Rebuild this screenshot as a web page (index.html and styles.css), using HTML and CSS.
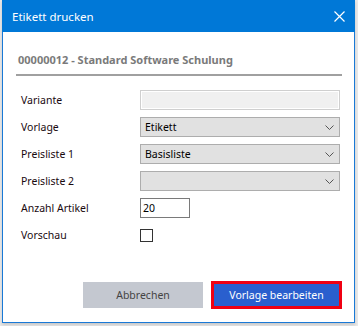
FILE: index.html
```html
<!DOCTYPE html>
<html lang="de">
<head>
    <meta charset="UTF-8">
    <title>Etikett drucken</title>
    <link rel="stylesheet" href="styles.css">
</head>
<body>
    <div class="dialog">
        <div class="title-bar">
            <span class="title">Etikett drucken</span>
            <svg class="close" width="11" height="11" viewBox="0 0 11 11">
                <path d="M0.5 0.5 L10.5 10.5 M10.5 0.5 L0.5 10.5" stroke="#fff" stroke-width="1.2" fill="none"/>
            </svg>
        </div>

        <div class="content">
            <div class="heading">00000012 - Standard Software Schulung</div>

            <div class="form">
                <label>Variante</label>
                <div class="field readonly"></div>

                <label>Vorlage</label>
                <div class="field combo"><span>Etikett</span><svg class="chevron" width="9" height="5" viewBox="0 0 9 5"><path d="M0.5 0.5 L4.5 4.5 L8.5 0.5" stroke="#555" fill="none"/></svg></div>

                <label>Preisliste 1</label>
                <div class="field combo"><span>Basisliste</span><svg class="chevron" width="9" height="5" viewBox="0 0 9 5"><path d="M0.5 0.5 L4.5 4.5 L8.5 0.5" stroke="#555" fill="none"/></svg></div>

                <label>Preisliste 2</label>
                <div class="field combo"><span></span><svg class="chevron" width="9" height="5" viewBox="0 0 9 5"><path d="M0.5 0.5 L4.5 4.5 L8.5 0.5" stroke="#555" fill="none"/></svg></div>

                <label>Anzahl Artikel</label>
                <div class="field number">20</div>

                <label>Vorschau</label>
                <div class="checkbox-cell"><div class="checkbox"></div></div>
            </div>

            <div class="button-container">
                <button class="btn-cancel">Abbrechen</button>
                <button class="btn-primary">Vorlage bearbeiten</button>
            </div>
        </div>
    </div>
</body>
</html>
```

FILE: styles.css
```css
body {
    margin: 0;
    background: #e9e9e9;
    font-family: "Noto Sans", "Open Sans", sans-serif;
    font-size: 10.5px;
    width: 358px;
    height: 326px;
    overflow: hidden;
}

.dialog {
    margin-left: 2px;
    width: 351px;
    height: 322px;
    border: 1px solid #1979d6;
    border-top: none;
    background: #fff;
    display: flex;
    flex-direction: column;
    box-shadow: 0 2px 3px rgba(0, 0, 0, 0.15);
}

.title-bar {
    height: 32px;
    background: #0078d7;
    color: #fff;
    display: flex;
    align-items: center;
    justify-content: space-between;
    padding: 0 10px 0 10px;
    margin: 0 -1px;
}

.title {
    font-size: 11.5px;
}

.content {
    flex: 1;
    display: flex;
    flex-direction: column;
    padding: 0 12px 0 13px;
}

.heading {
    margin-top: 20px;
    padding: 0 0 7px 2px;
    color: #7a7a7a;
    font-weight: bold;
    font-size: 11px;
    border-bottom: 2px solid #a0a0a0;
}

.form {
    display: grid;
    grid-template-columns: 119px 200px;
    grid-auto-rows: 20px;
    row-gap: 7px;
    margin-top: 14px;
    padding-left: 5px;
    align-items: center;
}

.form label {
    color: #1a0a10;
}

.field {
    box-sizing: border-box;
    height: 20px;
    display: flex;
    align-items: center;
    padding: 0 4px;
}

.readonly {
    background: #f0f0f0;
    border: 1px solid #cfcfcf;
    box-shadow: inset 0 0 0 1px #fff;
}

.combo {
    background: #e1e1e1;
    border: 1px solid #adadad;
    justify-content: space-between;
    padding-right: 5px;
}

.number {
    width: 50px;
    border: 1px solid #7a7a7a;
    padding: 0 2px;
}

.checkbox {
    width: 13px;
    height: 13px;
    box-sizing: border-box;
    border: 1px solid #333;
}

.button-container {
    display: flex;
    justify-content: flex-end;
    gap: 8px;
    margin-top: auto;
    margin-bottom: 13px;
}

.btn-cancel {
    width: 120px;
    height: 26px;
    margin-top: 1px;
    background: #c4c8d0;
    color: #444;
    border: none;
    font-family: inherit;
    font-size: 10.5px;
}

.btn-primary {
    width: 131px;
    height: 28px;
    background: #2a5fce;
    color: #fff;
    border: 3px solid #f00012;
    font-family: inherit;
    font-size: 10.5px;
}
```
